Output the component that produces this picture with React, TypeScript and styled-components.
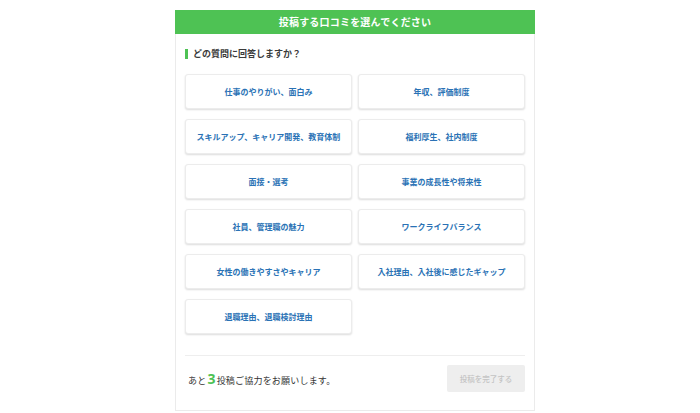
import React from "react";
import styled, { createGlobalStyle } from "styled-components";

const Global = createGlobalStyle`
  html, body { margin: 0; padding: 0; background: #ffffff; }
  body { font-family: "Noto Sans CJK JP", "Noto Sans", sans-serif; }
  * { box-sizing: border-box; }
`;

const Page = styled.div`
  display: flex;
  justify-content: center;
  padding-top: 10px;
  padding-left: 10px;
`;

const Panel = styled.section`
  width: 360px;
  display: flex;
  flex-direction: column;
`;

const Header = styled.h1`
  margin: 0;
  height: 24px;
  background: #4ec254;
  color: #ffffff;
  font-size: 10px;
  font-weight: 700;
  line-height: 24px;
  text-align: center;
  letter-spacing: 0.2px;
`;

const Body = styled.div`
  border: 1px solid #ebebeb;
  border-top: none;
  padding: 0 9px 18px;
  display: flex;
  flex-direction: column;
`;

const Title = styled.h2`
  margin: 15px 0 0;
  height: 10px;
  display: flex;
  align-items: center;
  gap: 5px;
  font-size: 9px;
  font-weight: 700;
  color: #3a3a3a;
  line-height: 10px;
  &::before {
    content: "";
    width: 3px;
    height: 10px;
    background: #4ec254;
  }
`;

const Grid = styled.div`
  margin-top: 15px;
  display: grid;
  grid-template-columns: 1fr 1fr;
  grid-auto-rows: 35px;
  column-gap: 6px;
  row-gap: 10px;
`;

const Choice = styled.button`
  border: 1px solid #ececec;
  border-radius: 3px;
  background: #ffffff;
  box-shadow: 0 1px 2px rgba(0, 0, 0, 0.14);
  color: #2a72b5;
  font-family: "Noto Sans CJK JP", sans-serif;
  font-size: 8px;
  font-weight: 700;
  padding: 0;
  display: flex;
  align-items: center;
  justify-content: center;
  cursor: pointer;
`;

const Divider = styled.hr`
  margin: 21px 0 0;
  border: none;
  border-top: 1px solid #eeeeee;
  width: 100%;
`;

const Footer = styled.div`
  margin-top: 9px;
  display: flex;
  align-items: center;
  justify-content: space-between;
  padding-left: 3px;
`;

const Remain = styled.p`
  margin: 0;
  font-size: 9px;
  color: #333333;
  display: flex;
  align-items: baseline;
  letter-spacing: 0.2px;
`;

const Count = styled.span`
  color: #4ec254;
  font-size: 14px;
  font-weight: 700;
  margin: 0 1px;
  font-family: "Noto Sans", sans-serif;
`;

const Submit = styled.button`
  width: 78px;
  height: 27px;
  border: none;
  border-radius: 2px;
  background: #eeeeee;
  color: #c4c4c4;
  font-family: "Noto Sans CJK JP", sans-serif;
  font-size: 7.5px;
  font-weight: 500;
  padding: 0;
`;

const choices = [
  "仕事のやりがい、面白み",
  "年収、評価制度",
  "スキルアップ、キャリア開発、教育体制",
  "福利厚生、社内制度",
  "面接・選考",
  "事業の成長性や将来性",
  "社員、管理職の魅力",
  "ワークライフバランス",
  "女性の働きやすさやキャリア",
  "入社理由、入社後に感じたギャップ",
  "退職理由、退職検討理由",
];

export default function App() {
  return (
    <>
      <Global />
      <Page>
        <Panel>
          <Header>投稿する口コミを選んでください</Header>
          <Body>
            <Title>どの質問に回答しますか？</Title>
            <Grid>
              {choices.map((c) => (
                <Choice key={c}>{c}</Choice>
              ))}
            </Grid>
            <Divider />
            <Footer>
              <Remain>
                あと<Count>3</Count>投稿ご協力をお願いします。
              </Remain>
              <Submit disabled>投稿を完了する</Submit>
            </Footer>
          </Body>
        </Panel>
      </Page>
    </>
  );
}
